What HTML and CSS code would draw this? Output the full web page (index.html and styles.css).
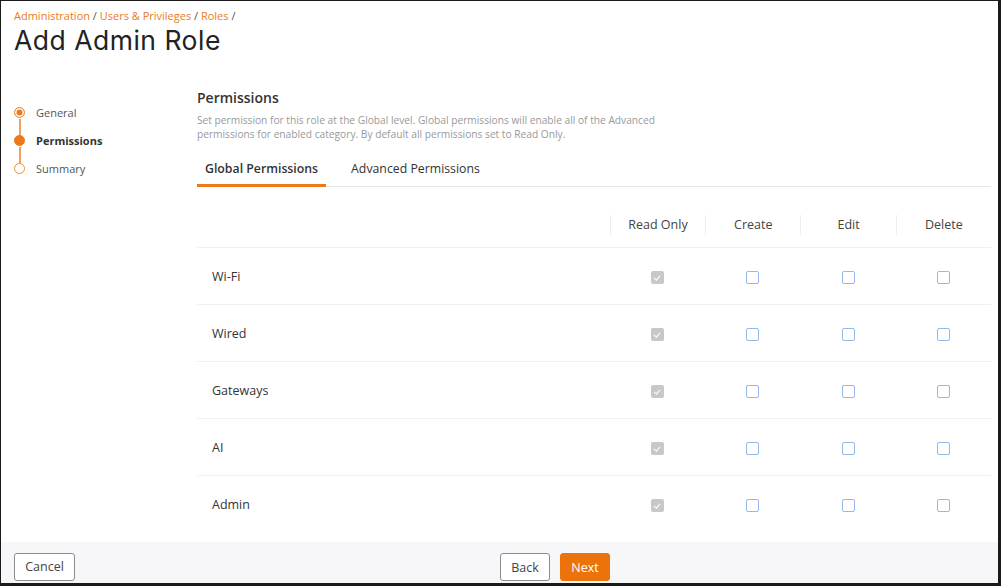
FILE: index.html
```html
<!DOCTYPE html>
<html lang="en">
<head>
    <meta charset="UTF-8">
    <title>Add Admin Role</title>
    <link rel="stylesheet" href="styles.css">
</head>
<body>
<div class="frame">
    <div class="page-head">
        <div class="breadcrumb">
            <a>Administration</a> / <a>Users &amp; Privileges</a> / <a>Roles</a> /
        </div>
        <h1>Add Admin Role</h1>
    </div>

    <div class="main">
        <ul class="stepper">
            <li class="step done"><span class="dot"></span>General</li>
            <li class="step active"><span class="dot"></span>Permissions</li>
            <li class="step"><span class="dot"></span>Summary</li>
        </ul>

        <div class="content">
            <h2>Permissions</h2>
            <p class="desc">Set permission for this role at the Global level. Global permissions will enable all of the Advanced<br>permissions for enabled category. By default all permissions set to Read Only.</p>

            <div class="tabs">
                <div class="tab selected">Global Permissions</div>
                <div class="tab">Advanced Permissions</div>
            </div>

            <div class="perm-table">
                <div class="row head">
                    <div class="name"></div>
                    <div class="cell">Read Only</div>
                    <div class="cell">Create</div>
                    <div class="cell">Edit</div>
                    <div class="cell">Delete</div>
                </div>
                <div class="row">
                    <div class="name">Wi-Fi</div>
                    <div class="cell"><span class="box locked"></span></div>
                    <div class="cell"><span class="box"></span></div>
                    <div class="cell"><span class="box"></span></div>
                    <div class="cell"><span class="box"></span></div>
                </div>
                <div class="row">
                    <div class="name">Wired</div>
                    <div class="cell"><span class="box locked"></span></div>
                    <div class="cell"><span class="box"></span></div>
                    <div class="cell"><span class="box"></span></div>
                    <div class="cell"><span class="box"></span></div>
                </div>
                <div class="row">
                    <div class="name">Gateways</div>
                    <div class="cell"><span class="box locked"></span></div>
                    <div class="cell"><span class="box"></span></div>
                    <div class="cell"><span class="box"></span></div>
                    <div class="cell"><span class="box"></span></div>
                </div>
                <div class="row">
                    <div class="name">AI</div>
                    <div class="cell"><span class="box locked"></span></div>
                    <div class="cell"><span class="box"></span></div>
                    <div class="cell"><span class="box"></span></div>
                    <div class="cell"><span class="box"></span></div>
                </div>
                <div class="row">
                    <div class="name">Admin</div>
                    <div class="cell"><span class="box locked"></span></div>
                    <div class="cell"><span class="box"></span></div>
                    <div class="cell"><span class="box"></span></div>
                    <div class="cell"><span class="box"></span></div>
                </div>
            </div>
        </div>
    </div>

    <div class="footer">
        <button class="btn cancel">Cancel</button>
        <div class="nav-btns">
            <button class="btn">Back</button>
            <button class="btn primary">Next</button>
        </div>
    </div>
</div>
</body>
</html>
```

FILE: styles.css
```css
html, body {
    margin: 0;
    padding: 0;
    background: #fff;
}
body {
    font-family: "Open Sans", "Noto Sans", sans-serif;
    color: #333;
}
.frame {
    width: 1001px;
    height: 586px;
    border: 1px solid #1a1a1a;
    border-right-width: 3px;
    border-bottom-width: 3px;
    box-sizing: border-box;
    display: flex;
    flex-direction: column;
    overflow: hidden;
    position: relative;
}
.page-head {
    padding: 7px 13px 0;
}
.breadcrumb {
    font-size: 11px;
    color: #555;
    line-height: 16px;
}
.breadcrumb a {
    color: #ec7a1c;
}
h1 {
    margin: 0;
    font-family: "Inter", sans-serif;
    font-weight: 400;
    font-size: 26.5px;
    color: #222;
    line-height: 32px;
    letter-spacing: 0.5px;
}
.main {
    flex: 1;
    display: flex;
    min-height: 0;
}
.stepper {
    list-style: none;
    margin: 0;
    padding: 51px 0 0 13px;
    width: 183px;
    box-sizing: border-box;
}
.step {
    position: relative;
    height: 28px;
    padding-left: 22px;
    font-size: 11px;
    line-height: 12px;
    color: #555;
}
.step.active {
    font-weight: 700;
    color: #333;
}
.step .dot {
    position: absolute;
    left: 0;
    top: 0;
    width: 9px;
    height: 9px;
    border: 1.5px solid #f0903a;
    border-radius: 50%;
    background: #fff;
}
.step.done .dot {
    background: #ec7a1c;
    box-shadow: inset 0 0 0 1.5px #fff;
}
.step.active .dot {
    background: #ec7a1c;
    border-color: #ec7a1c;
}
.step:not(:last-child)::after {
    content: "";
    position: absolute;
    left: 5px;
    top: 12px;
    width: 1.5px;
    height: 17px;
    background: #f0a060;
}
.content {
    flex: 1;
    padding: 32px 7px 0 13px;
    min-width: 0;
}
h2 {
    margin: 0;
    font-size: 14px;
    font-weight: 600;
    color: #333;
    line-height: 20px;
}
.desc {
    margin: 6px 0 0;
    font-size: 10.2px;
    color: #999;
    line-height: 13.5px;
}
.tabs {
    display: flex;
    margin-top: 15px;
    border-bottom: 1px solid #e6e6e6;
}
.tab {
    padding: 4px 8px 7px;
    font-size: 12.3px;
    color: #333;
    line-height: 17px;
    margin-right: 17px;
}
.tab.selected {
    font-weight: 600;
    border-bottom: 3px solid #ec7a1c;
    margin-bottom: -1px;
}
.perm-table {
    margin-top: 28px;
}
.row {
    display: flex;
    align-items: center;
    height: 57px;
    box-sizing: border-box;
    border-top: 1px solid #f0f0f0;
}
.row.head {
    height: 32px;
    border-top: none;
    align-items: flex-start;
    font-size: 12.5px;
    color: #444;
}
.name {
    flex: 1;
    padding-left: 15px;
    font-size: 12.5px;
    color: #333;
}
.cell {
    width: 95.3px;
    box-sizing: border-box;
    text-align: center;
    display: flex;
    justify-content: center;
}
.row.head .cell {
    border-left: 1px solid #eee;
    line-height: 20px;
}
.box {
    width: 13px;
    height: 13px;
    border: 1.5px solid #93b9ec;
    border-radius: 2px;
    box-sizing: border-box;
    margin-top: 2px;
}
.box.locked {
    border: none;
    background: #c8c8c8;
    position: relative;
}
.box.locked::after {
    content: "";
    position: absolute;
    left: 4.5px;
    top: 3px;
    width: 2.5px;
    height: 5px;
    border: solid #fff;
    border-width: 0 1.5px 1.5px 0;
    transform: rotate(40deg);
}
.footer {
    height: 41px;
    background: #f7f7f9;
    display: flex;
    align-items: center;
    padding: 0 13px;
    position: relative;
}
.nav-btns {
    position: absolute;
    left: 499px;
    top: 11px;
    display: flex;
    gap: 10px;
}
.btn {
    height: 28px;
    width: 50px;
    padding: 0;
    font-family: "Open Sans", sans-serif;
    font-size: 12.5px;
    color: #444;
    background: #fff;
    border: 1px solid #8c8c8c;
    border-radius: 3px;
    margin-top: 8px;
}
.btn.cancel {
    width: 61px;
}
.nav-btns .btn {
    margin-top: 0;
}
.btn.primary {
    background: #ec720c;
    border-color: #ec720c;
    color: #fff;
}
```
